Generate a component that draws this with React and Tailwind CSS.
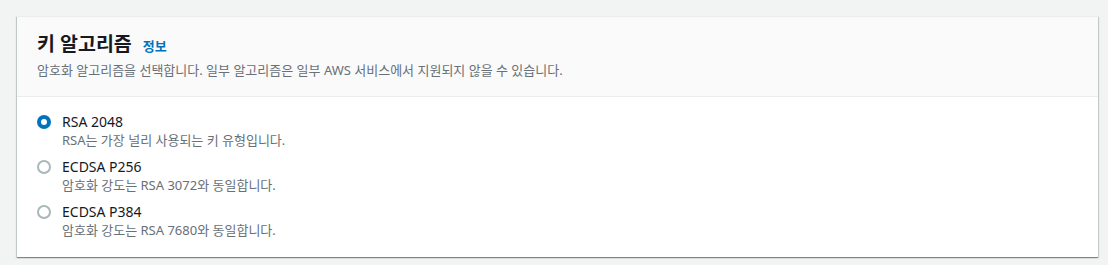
const OPTIONS = [
  { id: 'rsa2048', label: 'RSA 2048', desc: 'RSA는 가장 널리 사용되는 키 유형입니다.' },
  { id: 'p256', label: 'ECDSA P256', desc: '암호화 강도는 RSA 3072와 동일합니다.' },
  { id: 'p384', label: 'ECDSA P384', desc: '암호화 강도는 RSA 7680와 동일합니다.' },
]

function Radio({ checked }) {
  if (checked) {
    return (
      <span className="flex-shrink-0 w-[14px] h-[14px] rounded-full bg-[#0073bb] flex items-center justify-center">
        <span className="w-[6px] h-[6px] rounded-full bg-white" />
      </span>
    )
  }
  return <span className="flex-shrink-0 w-[14px] h-[14px] rounded-full border-2 border-[#aab7b8] bg-white" />
}

export default function App() {
  const selected = 'rsa2048'

  return (
    <div
      className="w-full h-[265px] bg-[#f2f3f3] pl-[17px] pr-[10px] pt-[16px]"
      style={{ fontFamily: "'Noto Sans', 'Noto Sans CJK KR', sans-serif" }}
    >
      <div className="bg-white border-t border-[#eaeded] shadow-[0_1px_1px_0_rgba(0,28,36,0.3),1px_1px_1px_0_rgba(0,28,36,0.15),-1px_1px_1px_0_rgba(0,28,36,0.15)]">
        {/* header */}
        <div className="bg-[#fafafa] border-b border-[#eaeded] px-5 pt-[15px] pb-[18px]">
          <div className="flex items-baseline gap-[11px] h-[24px]">
            <h2 className="text-[19.5px] leading-[24px] font-bold text-[#16191f]">키 알고리즘</h2>
            <a className="text-[13px] font-bold text-[#0073bb] cursor-pointer">정보</a>
          </div>
          <p className="mt-[6px] text-[13px] leading-[16px] text-[#687078]">
            암호화 알고리즘을 선택합니다. 일부 알고리즘은 일부 AWS 서비스에서 지원되지 않을 수 있습니다.
          </p>
        </div>

        {/* options */}
        <div className="px-5 pt-[15px] pb-[19px] flex flex-col gap-[9px]">
          {OPTIONS.map((o) => (
            <label key={o.id} className="flex flex-col cursor-pointer">
              <div className="flex items-center gap-[11px] h-[20px]">
                <Radio checked={o.id === selected} />
                <span className="text-[14px] leading-[20px] text-[#16191f]">{o.label}</span>
              </div>
              <span className="pl-[25px] text-[13px] leading-[16px] text-[#687078]">{o.desc}</span>
            </label>
          ))}
        </div>
      </div>
    </div>
  )
}
